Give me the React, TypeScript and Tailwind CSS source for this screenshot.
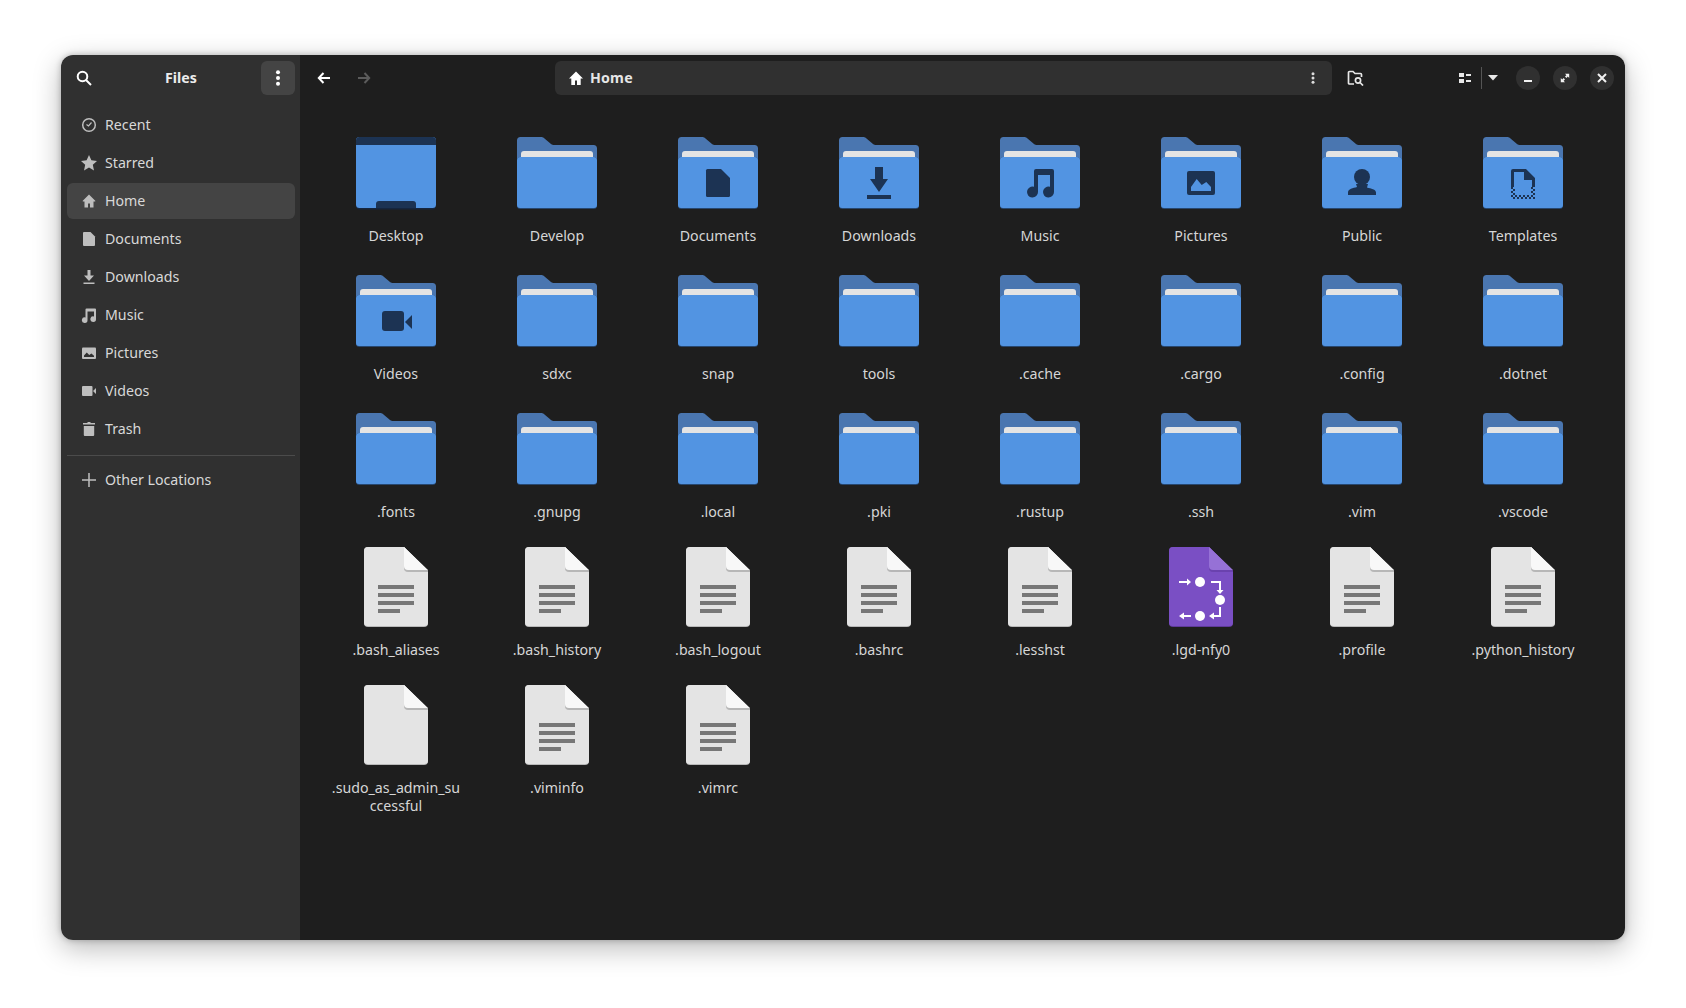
import React from "react";

const DARK = "#1c3353";
const FRONT = "#5294e2";

function Emblem({ name }: { name: string }) {
  switch (name) {
    case "Documents":
      return <path fill={DARK} d="M29.500 32H43l9 9v17.500a1.500 1.500 0 0 1-1.500 1.500h-21a1.500 1.500 0 0 1-1.500-1.500v-25A1.500 1.500 0 0 1 29.500 32z" />;
    case "Downloads":
      return <path fill={DARK} d="M36 30h8v12h5L40 55l-9-13h5zM28 58h24v4H28z" />;
    case "Music":
      return <path fill={DARK} d="M36 32h16a2 2 0 0 1 2 2v21a5.500 5.500 0 1 1-4-5.200V38H38v17a5.500 5.500 0 1 1-4-5.200V34a2 2 0 0 1 2-2z" />;
    case "Pictures":
      return (
        <g>
          <rect x="26" y="34" width="28" height="24" rx="2" fill={DARK} />
          <path fill={FRONT} d="M30 54v-4l5.700-8 5 6 4.600-3 4.700 5v4z" />
        </g>
      );
    case "Public":
      return (
        <g fill={DARK}>
          <ellipse cx="40" cy="40" rx="8" ry="8" />
          <path d="M34 47h12l-1 3.500c4 1 9 2 9 5V58H26v-2.500c0-3.500 5-4.500 9-5.500z" />
        </g>
      );
    case "Templates": {
      const dots: React.ReactNode[] = [];
      for (let y = 0; y < 6; y++) {
        for (let x = 0; x < 12; x++) {
          if ((x + y) % 2 === 0 && (y > 3 || x < 2 || x > 9)) {
            dots.push(<rect key={`${x}-${y}`} x={28 + x * 2} y={50 + y * 2} width="2" height="2" fill={DARK} />);
          }
        }
      }
      return (
        <g>
          <path fill={DARK} d="M30 32h13l9 9v9h-3V43h-8v-8H31v15h-3V34a2 2 0 0 1 2-2z" />
          {dots}
        </g>
      );
    }
    case "Videos":
      return (
        <g fill={DARK}>
          <rect x="26" y="36" width="22" height="20" rx="3" />
          <path d="M49 47l7-7v14z" />
        </g>
      );
    default:
      return null;
  }
}

function FolderIcon({ name }: { name: string }) {
  if (name === "Desktop") {
    return (
      <svg width="80" height="80" viewBox="0 -4 80 80">
        <rect x="0" y="1" width="80" height="71.500" rx="4" fill="#16263f" />
        <rect x="0" y="0" width="80" height="71" rx="3.500" fill={FRONT} />
        <path fill="#1c3353" d="M0 8V3.500A3.500 3.500 0 0 1 3.500 0h73A3.500 3.500 0 0 1 80 3.500V8z" />
        <path fill="#1c3353" d="M20 71v-4a3 3 0 0 1 3-3h34a3 3 0 0 1 3 3v4z" />
      </svg>
    );
  }
  return (
    <svg width="80" height="80" viewBox="0 -4 80 80">
      <path fill="#4a76b0" d="M3.500 0H24c1.500 0 2.500.5 3.500 1.500L34 7c1 .8 2 1 3 1h39.500A3.500 3.500 0 0 1 80 11.500V30H0V3.500A3.500 3.500 0 0 1 3.500 0z" />
      <rect x="4" y="14" width="72" height="20" rx="3" fill="#e4e4e4" />
      <path fill="#27476f" d="M0 23.500A3.500 3.500 0 0 1 3.500 20h73a3.500 3.500 0 0 1 3.500 3.500V68.500a3.500 3.500 0 0 1-3.500 3.500h-73A3.500 3.500 0 0 1 0 68.500z" />
      <path fill={FRONT} d="M0 23.500A3.500 3.500 0 0 1 3.500 20h73a3.500 3.500 0 0 1 3.500 3.500V68a3 3 0 0 1-3 3H3a3 3 0 0 1-3-3z" />
      <Emblem name={name} />
    </svg>
  );
}

function FileIcon({ lines = true }: { lines?: boolean }) {
  return (
    <svg width="64" height="80" viewBox="0 0 64 80">
      <path fill="#b9b9b9" d="M4 0h36l24 24v52a4 4 0 0 1-4 4H4a4 4 0 0 1-4-4V4a4 4 0 0 1 4-4z" />
      <path fill="#e4e4e4" d="M4 0h36l24 24v51.500a3.500 3.500 0 0 1-3.500 3.500h-57A3.500 3.500 0 0 1 0 75.500V4a4 4 0 0 1 4-4z" />
      <path fill="#b7b7b7" d="M40 0v21a4 4 0 0 0 4 4h20v-1z" />
      <path fill="#f8f8f8" d="M40 0v19a4 4 0 0 0 4 4h20z" />
      {lines && (
        <g fill="#777777">
          <rect x="14" y="38" width="36" height="4" />
          <rect x="14" y="46" width="36" height="4" />
          <rect x="14" y="54" width="36" height="4" />
          <rect x="14" y="62" width="22" height="4" />
        </g>
      )}
    </svg>
  );
}

function FlowIcon() {
  return (
    <svg width="64" height="80" viewBox="0 0 64 80">
      <path fill="#5f3a9a" d="M4 0h36l24 24v52a4 4 0 0 1-4 4H4a4 4 0 0 1-4-4V4a4 4 0 0 1 4-4z" />
      <path fill="#7a4fc4" d="M4 0h36l24 24v51.500a3.500 3.500 0 0 1-3.500 3.500h-57A3.500 3.500 0 0 1 0 75.500V4a4 4 0 0 1 4-4z" />
      <path fill="#6a42ae" d="M40 0v21a4 4 0 0 0 4 4h20v-1z" />
      <path fill="#9671d6" d="M40 0v19a4 4 0 0 0 4 4h20z" />
      <g fill="#ffffff">
        <circle cx="31" cy="35" r="5" />
        <circle cx="51" cy="53" r="5" />
        <circle cx="31" cy="69" r="5" />
        <path d="M10 34h8v-2.500l4 3.500-4 3.500V36h-8z" />
        <path d="M22 68v2h-7v2.500L10 69l5-3.500V68z" />
        <path d="M42 34h10v9h2.500L51 47l-3.500-4H50v-7h-8z" />
        <path d="M50 60h2v10h-7v2.500L40 69l5-3.500V68h5z" />
      </g>
    </svg>
  );
}

const rows: string[] = [
  "Desktop", "Develop", "Documents", "Downloads", "Music", "Pictures", "Public", "Templates",
  "Videos", "sdxc", "snap", "tools", ".cache", ".cargo", ".config", ".dotnet",
  ".fonts", ".gnupg", ".local", ".pki", ".rustup", ".ssh", ".vim", ".vscode",
];
const files = [".bash_aliases", ".bash_history", ".bash_logout", ".bashrc", ".lesshst", ".lgd-nfy0", ".profile", ".python_history", ".sudo_as_admin_su\nccessful", ".viminfo", ".vimrc"];

function Cell({ label, children }: { label: string; children: React.ReactNode }) {
  return (
    <div className="h-[138px] flex flex-col items-center">
      <div className="h-[80px] flex items-center justify-center">{children}</div>
      <div className="mt-[14px] text-[14.2px] leading-[18px] text-[#d6d6d6] text-center whitespace-pre-line">{label}</div>
    </div>
  );
}

const I = "#bebebe";
const sideIcons: Record<string, React.ReactNode> = {
  Recent: (
    <g>
      <circle cx="8" cy="8" r="6.300" fill="none" stroke={I} strokeWidth="1.500" />
      <path fill="none" stroke={I} strokeWidth="1.200" d="M5.500 7.500l2 1.500 3-3.500" />
    </g>
  ),
  Starred: <path fill={I} d="M8 0l2.400 5.300 5.600.6-4.200 3.800 1.200 5.700L8 12.500 3 15.400l1.200-5.700L0 5.900l5.600-.6z" />,
  Home: <path fill={I} d="M8 1.500L1.500 8 2 8.500h1.500v6H7V10.500h2v4h3.500v-6H14l.5-.5z" />,
  Documents: <path fill={I} d="M3 1h6.500L14 5.500V14a1 1 0 0 1-1 1H3a1 1 0 0 1-1-1V2a1 1 0 0 1 1-1z" />,
  Downloads: <path fill={I} d="M6.500 1h3v5.500H13L8 12 3 6.500h3.500zM2.500 13.500h11V15h-11z" />,
  Music: <path fill={I} d="M5.500 1.500H14a1 1 0 0 1 1 1V12a2.800 2.800 0 1 1-2-2.600V4.500H6.500V13a2.800 2.800 0 1 1-2-2.600V2.500a1 1 0 0 1 1-1z" />,
  Pictures: (
    <g>
      <rect x="1" y="2.500" width="14" height="11.500" rx="1" fill={I} />
      <path fill="#303030" d="M3 12v-1.500l2.800-3 2.400 2.600 2.200-1.500L13 10.800V12z" />
    </g>
  ),
  Videos: <path fill={I} d="M2 3h8.500a1 1 0 0 1 1 1v8a1 1 0 0 1-1 1H2a1 1 0 0 1-1-1V4a1 1 0 0 1 1-1zM12 8l3-3v6z" />,
  Trash: <path fill={I} d="M6.500 1h3v1H14v1.500H2V2h4.500zM2.800 5h10.400v9a1 1 0 0 1-1 1H3.800a1 1 0 0 1-1-1z" />,
  "Other Locations": <path fill={I} d="M7.250 1h1.500v6.250H15v1.500H8.750V15h-1.500V8.750H1v-1.500h6.250z" />,
};

function SideRow({ name, active }: { name: string; active?: boolean }) {
  return (
    <div className={`h-[36px] rounded-[6px] flex items-center pl-[14px] gap-[8px] text-[14.2px] text-[#d8d8d8] ${active ? "bg-[#444444]" : ""}`}>
      <svg width="16" height="16" viewBox="0 0 16 16">{sideIcons[name]}</svg>
      <span className="pb-[1px]">{name}</span>
    </div>
  );
}

function Kebab({ r, gap }: { r: number; gap: number }) {
  return (
    <svg width="16" height="16" viewBox="0 0 16 16" fill="currentColor">
      <circle cx="8" cy={8 - gap} r={r} />
      <circle cx="8" cy="8" r={r} />
      <circle cx="8" cy={8 + gap} r={r} />
    </svg>
  );
}

function WinBtn({ children }: { children: React.ReactNode }) {
  return <div className="w-[24px] h-[24px] rounded-full bg-[#303030] flex items-center justify-center">{children}</div>;
}

export default function App() {
  return (
    <div className="w-[1686px] h-[1008px] bg-white pt-[55px] pl-[61px] overflow-hidden" style={{ fontFamily: '"Noto Sans", sans-serif' }}>
      <div className="w-[1564px] h-[885px] rounded-[12px] flex overflow-hidden shadow-[0_8px_28px_rgba(0,0,0,0.28),0_0_6px_rgba(0,0,0,0.25)]">
        <aside className="w-[239px] shrink-0 bg-[#303030] flex flex-col">
          <div className="h-[46px] flex items-center pl-[6px] pr-[5px] shrink-0">
            <div className="w-[34px] h-[34px] flex items-center justify-center text-white">
              <svg width="16" height="16" viewBox="0 0 16 16" fill="none" stroke="currentColor" strokeWidth="2">
                <circle cx="6.500" cy="6.500" r="4.800" />
                <path d="M10 10l5 5" />
              </svg>
            </div>
            <div className="flex-1 text-center text-[14.2px] font-bold text-[#ececec] pb-[1px]">Files</div>
            <div className="w-[34px] h-[34px] rounded-[6px] bg-[#444444] flex items-center justify-center text-white">
              <Kebab r={2} gap={5.700} />
            </div>
          </div>
          <nav className="pl-[6px] pr-[5px] pt-[6px] flex flex-col gap-[2px]">
            {["Recent", "Starred", "Home", "Documents", "Downloads", "Music", "Pictures", "Videos", "Trash"].map((n) => (
              <SideRow key={n} name={n} active={n === "Home"} />
            ))}
            <div className="h-px bg-[#4b4b4b] mt-[6px] mb-[4px]" />
            <SideRow name="Other Locations" />
          </nav>
        </aside>
        <main className="flex-1 bg-[#1e1e1e] flex flex-col min-w-0">
          <header className="h-[46px] shrink-0 flex items-center">
            <div className="w-[40px] pl-[16px] text-white">
              <svg width="16" height="16" viewBox="0 0 16 16" fill="none" stroke="currentColor" strokeWidth="2">
                <path d="M14 8H3M7.500 3L2.800 8l4.700 5" />
              </svg>
            </div>
            <div className="w-[215px] pl-[16px] text-[#5b5b5b]">
              <svg width="16" height="16" viewBox="0 0 16 16" fill="none" stroke="currentColor" strokeWidth="2">
                <path d="M2 8h11M8.500 3l4.700 5-4.700 5" />
              </svg>
            </div>
            <div className="w-[777px] h-[34px] rounded-[6px] bg-[#303030] flex items-center pl-[13px] pr-[11px] text-white">
              <svg width="16" height="16" viewBox="0 0 16 16">
                <path fill="#ffffff" d="M8 1.500L1 8.500h2.300V15H7v-4.500h2V15h3.700V8.500H15z" />
              </svg>
              <span className="ml-[6px] text-[14.2px] font-bold tracking-[0.2px] text-[#e6e6e6] pb-[1px]">Home</span>
              <span className="ml-auto text-[#dddddd]"><Kebab r={1.500} gap={4.200} /></span>
            </div>
            <div className="ml-[15px] text-[#e8e8e8]">
              <svg width="17" height="16" viewBox="0 0 17 16" fill="none" stroke="currentColor" strokeWidth="1.700">
                <path d="M7 14H2.500a1 1 0 0 1-1-1V2.500a1 1 0 0 1 1-1h3.500l2 2h5.500a1 1 0 0 1 1 1V7" />
                <circle cx="11" cy="10.500" r="2.600" />
                <path d="M13 12.500l3 3" />
              </svg>
            </div>
            <div className="ml-[94px] flex items-center text-[#e8e8e8]">
              <svg width="14" height="16" viewBox="0 0 14 16" fill="currentColor">
                <rect x="1" y="3" width="5" height="4" />
                <rect x="1" y="9" width="5" height="4" />
                <rect x="8" y="4" width="5" height="2" />
                <rect x="8" y="10" width="5" height="2" />
              </svg>
              <div className="w-px h-[22px] bg-[#555555] ml-[9px]" />
              <svg className="ml-[6px]" width="10" height="6" viewBox="0 0 10 6" fill="currentColor">
                <path d="M0 0h10L5 5.500z" />
              </svg>
            </div>
            <div className="ml-[18px] flex items-center gap-[13px] mr-[11px] text-[#f2f2f2]">
              <WinBtn>
                <svg width="10" height="10" viewBox="0 0 10 10" fill="currentColor"><rect x="1" y="7" width="8" height="2" /></svg>
              </WinBtn>
              <WinBtn>
                <svg width="10" height="10" viewBox="0 0 10 10" fill="currentColor">
                  <path d="M5 .8h4.200V5L7.800 3.600 6.400 5 5 3.600l1.400-1.400zM5 9.200H.8V5l1.400 1.400L3.600 5 5 6.400 3.600 7.800z" />
                </svg>
              </WinBtn>
              <WinBtn>
                <svg width="10" height="10" viewBox="0 0 10 10" fill="none" stroke="currentColor" strokeWidth="2">
                  <path d="M1 1l8 8M9 1L1 9" />
                </svg>
              </WinBtn>
            </div>
          </header>
          <div className="pl-[15.500px] pt-[32px] grid grid-cols-[repeat(8,161px)]">
            {rows.map((n) => (
              <Cell key={n} label={n}><FolderIcon name={n} /></Cell>
            ))}
            {files.map((n) => (
              <Cell key={n} label={n}>
                {n === ".lgd-nfy0" ? <FlowIcon /> : <FileIcon lines={!n.startsWith(".sudo")} />}
              </Cell>
            ))}
          </div>
        </main>
      </div>
    </div>
  );
}
